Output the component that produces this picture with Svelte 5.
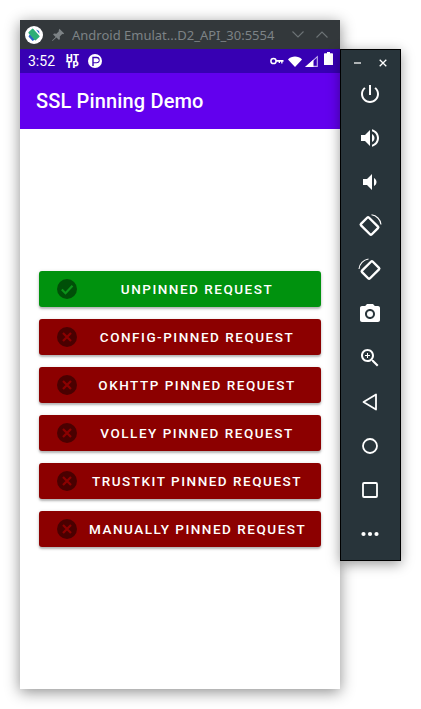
<script lang="ts">
  // Emulator window + its tool strip, with the SSL pinning demo app inside.
  const REQUESTS = [
    { label: 'UNPINNED REQUEST', ok: true },
    { label: 'CONFIG-PINNED REQUEST', ok: false },
    { label: 'OKHTTP PINNED REQUEST', ok: false },
    { label: 'VOLLEY PINNED REQUEST', ok: false },
    { label: 'TRUSTKIT PINNED REQUEST', ok: false },
    { label: 'MANUALLY PINNED REQUEST', ok: false },
  ];
</script>

<div class="desktop">
  <div class="window">
    <div class="titlebar">
      <span class="logo">
        <svg viewBox="0 0 18 18" width="18" height="18">
          <circle cx="9" cy="9" r="9" fill="#fff" />
          <path d="M3.500 10.500l4 4.500 2.500-1.500-5-5.500z" fill="#2a62c9" />
          <rect x="5.800" y="3" width="6.400" height="11" rx="1" transform="rotate(-42 9 8.500)" fill="#2cae78" />
          <path d="M11 3.500l3 1.500 .5 3z" fill="#2a62c9" />
        </svg>
      </span>
      <svg class="pin" viewBox="0 0 14 14" width="14" height="14">
        <path d="M8.400 .8l4.800 4.800-1.100 .7-.9-.2-2.400 2.400 .1 2.500-.9 .9-2.500-2.500L1.500 13l-.5-.5 3.600-3.500-2.500-2.500 .9-.9 2.500 .1 2.400-2.400-.2-.9z" fill="#7d8386" />
      </svg>
      <span class="wintitle">Android Emulat...D2_API_30:5554</span>
      <svg class="chev first" viewBox="0 0 12 7" width="12" height="7"><path d="M.5 .5l5.500 5.500 5.500-5.500" /></svg>
      <svg class="chev" viewBox="0 0 12 7" width="12" height="7"><path d="M.5 6.500l5.500-5.500 5.500 5.500" /></svg>
    </div>

    <div class="statusbar">
      <span class="time">3:52</span>
      <span class="http">HT<br />TP</span>
      <svg class="toolkit" viewBox="0 0 14 14" width="14" height="14">
        <circle cx="7" cy="7" r="7" fill="#fff" />
        <path d="M4.300 12V2.800h4.200a3.200 3.200 0 0 1 0 6.400H5.700V12z" fill="#3700b3" />
        <path d="M5.700 4.200h3a2 2 0 0 1 0 4H5.700z" fill="#fff" />
      </svg>
      <span class="spacer"></span>
      <svg class="key" viewBox="0 0 14 8" width="14" height="8">
        <circle cx="3.500" cy="4" r="2.600" fill="none" stroke="#fff" stroke-width="1.500" />
        <path d="M6 3h7.500v1.700H12.500v1.800h-1.300V4.700H10v1.300H8.700V4.700H6z" fill="#fff" />
      </svg>
      <svg class="wifi" viewBox="0 0 14 11" width="14" height="11"><path d="M0 3.400C3.800 -.4 10.200 -.4 14 3.400L7 11z" fill="#fff" /></svg>
      <svg class="signal" viewBox="0 0 13 12" width="13" height="12">
        <path d="M12.300 1.700V11.400H1.700z" fill="#3700b3" stroke="#c4b3ee" stroke-width="1.100" />
        <path d="M8.500 4.500V12H0z" fill="#fff" />
      </svg>
      <svg class="battery" viewBox="0 0 9 13" width="9" height="13"><path d="M3 0h3v1.200H8.200a.8 .8 0 0 1 .8 .8V13H0V2a.8 .8 0 0 1 .8-.8H3z" fill="#fff" /></svg>
    </div>

    <div class="appbar">SSL Pinning Demo</div>

    <main class="content">
      {#each REQUESTS as req (req.label)}
        <button type="button" class="req" class:ok={req.ok}>
          <svg class="state" viewBox="0 0 20 20" width="20" height="20">
            <circle cx="10" cy="10" r="10" class="disc" />
            {#if req.ok}
              <path d="M4.800 10.500l3.700 3.700L15.500 6.800" class="mark" />
            {:else}
              <path d="M6 6l8 8M14 6l-8 8" class="mark" />
            {/if}
          </svg>
          <span class="label">{req.label}</span>
        </button>
      {/each}
    </main>
  </div>

  <aside class="tools">
    <div class="winbtns">
      <span class="min"></span>
      <svg viewBox="0 0 8 8" width="8" height="8"><path d="M.7 .7l6.600 6.600M7.300 .7L.7 7.300" stroke="#fff" stroke-width="1.300" /></svg>
    </div>
    <div class="toollist">
      <svg viewBox="0 0 24 24"><path d="M13 3h-2v10h2V3zm4.830 2.170l-1.420 1.420C17.990 7.860 19 9.810 19 12c0 3.870-3.130 7-7 7s-7-3.130-7-7c0-2.190 1.010-4.140 2.580-5.420L6.170 5.170C4.230 6.820 3 9.260 3 12c0 4.970 4.030 9 9 9s9-4.030 9-9c0-2.740-1.230-5.180-3.170-6.830z" /></svg>
      <svg viewBox="0 0 24 24"><path d="M3 9v6h4l5 5V4L7 9H3zm13.500 3c0-1.770-1.020-3.290-2.500-4.030v8.050c1.480-.73 2.500-2.250 2.500-4.020zM14 3.230v2.060c2.890.86 5 3.540 5 6.710s-2.110 5.850-5 6.710v2.060c4.010-.91 7-4.490 7-8.770s-2.990-7.860-7-8.770z" /></svg>
      <svg viewBox="0 0 24 24"><path d="M18.500 12c0-1.770-1.020-3.290-2.500-4.030v8.050c1.480-.73 2.500-2.250 2.500-4.020zM5 9v6h4l5 5V4L9 9H5z" /></svg>
      <svg viewBox="0 0 24 24" class="outline">
        <rect x="4" y="6.500" width="15" height="11" rx="1" transform="rotate(45 11.500 12)" stroke-width="2.400" />
        <path d="M13.500 .8A11 11 0 0 1 23 10.500" stroke-width="1.100" />
      </svg>
      <svg viewBox="0 0 24 24" class="outline">
        <rect x="5" y="6.500" width="15" height="11" rx="1" transform="rotate(-45 12.500 12)" stroke-width="2.400" />
        <path d="M1 11A11 11 0 0 1 10.500 1" stroke-width="1.100" />
      </svg>
      <svg viewBox="0 0 24 24">
        <path fill-rule="evenodd" d="M9 2L7.170 4H4C2.900 4 2 4.900 2 6v12c0 1.100 .9 2 2 2h16c1.100 0 2-.9 2-2V6c0-1.100-.9-2-2-2h-3.170L15 2H9zm3 15c-2.760 0-5-2.240-5-5s2.240-5 5-5 5 2.240 5 5-2.240 5-5 5z" />
        <circle cx="12" cy="12" r="3" />
      </svg>
      <svg viewBox="0 0 24 24"><path d="M15.500 14h-.79l-.28-.27C15.410 12.590 16 11.110 16 9.500 16 5.910 13.090 3 9.500 3S3 5.910 3 9.500 5.910 16 9.500 16c1.610 0 3.090-.59 4.230-1.570l.27 .28v.79l5 4.990L20.490 19l-4.990-5zm-6 0C7.010 14 5 11.990 5 9.500S7.010 5 9.500 5 14 7.010 14 9.500 11.990 14 9.500 14z" /><path d="M12 10h-2v2H9v-2H7V9h2V7h1v2h2v1z" /></svg>
      <svg viewBox="0 0 24 24" class="outline"><path d="M18 4.500v15L5.500 12z" stroke-width="1.800" stroke-linejoin="round" /></svg>
      <svg viewBox="0 0 24 24" class="outline"><circle cx="12" cy="12" r="7" stroke-width="1.800" /></svg>
      <svg viewBox="0 0 24 24" class="outline"><rect x="5" y="5" width="14" height="14" rx="1" stroke-width="1.800" /></svg>
      <svg viewBox="0 0 24 24"><circle cx="5.500" cy="12" r="2.100" /><circle cx="12" cy="12" r="2.100" /><circle cx="18.500" cy="12" r="2.100" /></svg>
    </div>
  </aside>
</div>

<style>
  :global(body) {
    background: #fff;
  }
  .desktop {
    display: flex;
    align-items: flex-start;
    width: 421px;
    height: 709px;
    padding: 20px 0 0 20px;
    box-sizing: border-box;
    overflow: hidden;
    font-family: Roboto, "Liberation Sans", sans-serif;
  }
  .window {
    display: flex;
    flex-direction: column;
    width: 320px;
    height: 669px;
    flex: none;
    background: #fff;
    box-shadow: 0 3px 14px rgba(0, 0, 0, 0.45);
  }
  .titlebar {
    display: flex;
    align-items: center;
    height: 29px;
    flex: none;
    background: #33383b;
  }
  .logo {
    display: flex;
    margin-left: 5px;
  }
  .pin {
    margin-left: 8px;
  }
  .wintitle {
    margin-left: 7px;
    width: 202px;
    flex: none;
    font: 13px "Noto Sans", sans-serif;
    color: #7d8386;
    white-space: nowrap;
  }
  .chev {
    margin-left: 12px;
    fill: none;
    stroke: #6d7376;
    stroke-width: 1.1;
  }
  .chev.first {
    margin-left: 18px;
  }
  .statusbar {
    display: flex;
    align-items: center;
    height: 24px;
    flex: none;
    padding: 0 7px 0 8px;
    box-sizing: border-box;
    background: #3700b3;
    color: #fff;
  }
  .time {
    width: 38px;
    font-size: 14px;
  }
  .http {
    width: 22px;
    font-size: 9.500px;
    font-weight: 900;
    letter-spacing: 0.5px;
    line-height: 7.500px;
    text-align: left;
  }
  .spacer {
    flex: 1;
  }
  .key {
    margin-right: 4px;
  }
  .wifi {
    margin-right: 3px;
  }
  .signal {
    margin-right: 6px;
  }
  .battery {
    margin-bottom: 5px;
  }
  .appbar {
    display: flex;
    align-items: center;
    height: 56px;
    flex: none;
    padding-left: 16px;
    background: #6200ee;
    color: #fff;
    font-size: 20px;
    font-weight: 500;
    letter-spacing: 0.15px;
  }
  .content {
    display: flex;
    flex-direction: column;
    gap: 12px;
    padding: 142px 19px 0;
  }
  .req {
    display: flex;
    align-items: center;
    height: 36px;
    padding: 0 16px 0 18px;
    border: 0;
    border-radius: 3px;
    background: #8c0000;
    color: #fff;
    font: 500 13.500px Roboto, sans-serif;
    letter-spacing: 1.520px;
    box-shadow: 0 2px 2px rgba(0, 0, 0, 0.22), 0 1px 4px rgba(0, 0, 0, 0.14);
  }
  .req.ok {
    background: #00920e;
  }
  .state {
    flex: none;
  }
  .disc {
    fill: #4a0000;
  }
  .mark {
    fill: none;
    stroke: #8c0000;
    stroke-width: 2.200;
  }
  .ok .disc {
    fill: #004f08;
  }
  .ok .mark {
    stroke: #0c921a;
  }
  .label {
    flex: 1;
    margin-left: 12px;
    text-align: center;
    white-space: nowrap;
  }
  .tools {
    display: flex;
    flex-direction: column;
    width: 61px;
    height: 512px;
    margin-top: 29px;
    flex: none;
    box-sizing: border-box;
    background: #28343a;
    border: 1px solid #000;
    box-shadow: 0 3px 12px rgba(0, 0, 0, 0.4);
  }
  .winbtns {
    display: flex;
    align-items: center;
    justify-content: space-between;
    height: 26px;
    flex: none;
    padding: 0 13px;
  }
  .min {
    width: 7px;
    height: 1.500px;
    background: #aeb3b5;
  }
  .toollist {
    display: flex;
    flex-direction: column;
    align-items: center;
    gap: 20px;
    padding: 6px 1px 0 0;
  }
  .toollist svg {
    width: 24px;
    height: 24px;
    fill: #fff;
  }
  .toollist .outline {
    fill: none;
    stroke: #fff;
  }
</style>
